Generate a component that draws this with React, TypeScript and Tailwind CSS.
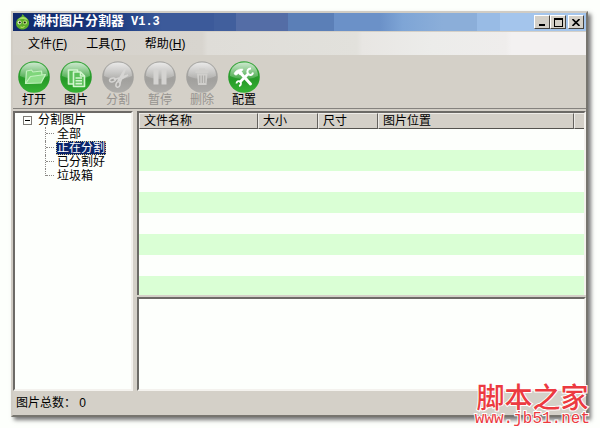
import React from 'react'

const FONT = "font-['Liberation_Sans','Noto_Sans_CJK_SC',sans-serif]"
const TITLE_FONT = "font-['Liberation_Mono','Noto_Sans_CJK_SC',monospace]"

// 系统控件的凸起 / 凹陷边框
const SUNKEN = 'border-2 border-t-[#6c6a66] border-l-[#6c6a66] border-r-[#f4f2ee] border-b-[#f4f2ee]'
const RAISED = 'border border-t-white border-l-white border-r-[#45423e] border-b-[#45423e]'

const menus = [
    { label: '文件', hotkey: 'F' },
    { label: '工具', hotkey: 'T' },
    { label: '帮助', hotkey: 'H' },
]

const tools = [
    { label: '打开', icon: 'open', enabled: true },
    { label: '图片', icon: 'image', enabled: true },
    { label: '分割', icon: 'cut', enabled: false },
    { label: '暂停', icon: 'pause', enabled: false },
    { label: '删除', icon: 'trash', enabled: false },
    { label: '配置', icon: 'config', enabled: true },
]

const columns = [
    { label: '文件名称', width: 'w-[119px]' },
    { label: '大小', width: 'w-[60px]' },
    { label: '尺寸', width: 'w-[60px]' },
    { label: '图片位置', width: '' },
    { label: '', width: 'w-[10px]' },
]

const treeItems = ['全部', '正在分割', '已分割好', '垃圾箱']

const glyphs: Record<string, React.ReactNode> = {
    open: (
        <g stroke="#c3f2bf" strokeWidth="1.2" strokeLinejoin="round">
            <path d="M7.500 22.500l1-12.500 5-1 1.500 2 8.500-1 .5 4" fill="#7fd67b" />
            <path d="M7.500 22.500l5-7 15-2L23 22z" fill="#8fdf8b" />
        </g>
    ),
    image: (
        <g stroke="#d3f6cf" strokeWidth="1.6" fill="#5cc15a" strokeLinejoin="round">
            <path d="M8.500 9h9v14h-9z" />
            <path d="M13.500 11h7l4 4v10.500h-11z" />
            <path d="M20.500 11v4h4M15.500 17h6.500M15.500 19.800h6.500M15.500 22.600h6.500" fill="none" />
        </g>
    ),
    cut: (
        <g stroke="#d6d5d3" fill="none" strokeLinecap="round">
            <path d="M12.500 18.500L26 14l-9 5.500M16 20L23.500 7.500 18 22" strokeWidth="1.600" />
            <ellipse cx="10.500" cy="19" rx="3" ry="1.800" strokeWidth="1.500" transform="rotate(-15 10.500 19)" />
            <ellipse cx="16" cy="23.500" rx="2" ry="2.800" strokeWidth="1.500" transform="rotate(15 16 23.500)" />
        </g>
    ),
    pause: <path d="M9.500 8.500h5v15h-5zM17.500 8.500h5v15h-5z" fill="#d4d3d1" />,
    trash: (
        <g fill="#d0cfcc">
            <path d="M13 7.500h6V9h-6zM9.500 9h13v3h-13zM11 12.500h10.500L20.500 24h-8.500z" />
            <path d="M13.800 14.500v7.500M16.300 14.500v7.500M18.800 14.500v7.500" stroke="#a5a4a1" />
        </g>
    ),
    config: (
        <g fill="#fff" stroke="#fff">
            <path d="M6 13c1-3 4-5.500 9-5l-.5 1.500-1 1 1 1.500-2.500 2-1.500-1.500-2.500 1.800z" strokeWidth="0.500" />
            <path d="M13 12.500l9.500 10.500" strokeWidth="3" strokeLinecap="round" />
            <path d="M11.500 21.500l9-9" strokeWidth="2.600" />
            <path d="M23 7.500c-3 0-4.500 2.500-3 5s4.500 2 5-1" strokeWidth="2" fill="none" />
            <path d="M8.500 22.500c0-2 2-3 3.500-2s1.500 4-1 4.500" strokeWidth="1.800" fill="none" />
        </g>
    ),
}

const ToolIcon: React.FC<{ name: string; enabled: boolean }> = ({ name, enabled }) => (
    <svg viewBox="0 0 32 32" className="h-8 w-8" aria-hidden="true">
        <defs>
            <linearGradient id={`ball-${name}`} x1="0" y1="0" x2="0" y2="1">
                <stop offset="0" stopColor={enabled ? '#36a43a' : '#aaa9a6'} />
                <stop offset="0.600" stopColor={enabled ? '#279b29' : '#a2a19e'} />
                <stop offset="1" stopColor={enabled ? '#37b334' : '#aeadaa'} />
            </linearGradient>
            <linearGradient id={`gloss-${name}`} x1="0" y1="0" x2="0" y2="1">
                <stop offset="0" stopColor="#fff" stopOpacity="0.750" />
                <stop offset="1" stopColor="#fff" stopOpacity="0.150" />
            </linearGradient>
        </defs>
        <circle cx="16" cy="16" r="15.800" fill={`url(#ball-${name})`} />
        <path d="M2 15C2 6 8 1.500 16 1.500S30 6 30 15c-8 4-20 4-28 0z" fill={`url(#gloss-${name})`} />
        {glyphs[name]}
    </svg>
)

const AppIcon = () => (
    <svg viewBox="0 0 16 16" className="h-4 w-4" aria-hidden="true">
        <path d="M7 0c1.500 1 2 1.500 2.500 2.500C13 4 14.500 7 14 10s-3 5.500-6.500 5.500S1 13 1 9.500 3 4 6 3C7 2 7.200 1 7 0z" fill="#5fae2c" />
        <path d="M3 6c1-2 3-3 5-3s4 1 5 3.500C10 5 6 4.500 3 6z" fill="#a5dc68" />
        <circle cx="4.500" cy="8.500" r="2" fill="#e7f2ce" />
        <circle cx="10" cy="8.500" r="2" fill="#c7e58a" />
        <circle cx="4.800" cy="8.500" r="1.100" fill="#17230d" />
        <circle cx="9.800" cy="8.500" r="1.100" fill="#17230d" />
        <path d="M5.500 13q2 1 4-.5" stroke="#d5e870" fill="none" />
    </svg>
)

const TitleBar = () => (
    <header className="flex h-[18px] shrink-0 items-center bg-[linear-gradient(to_right,#102a6b_0%,#19357a_16%,#2b4b8e_22%,#3c5a9a_26%,#3c5a9a_35%,#415f9d_35%,#415f9d_39%,#546da6_39%,#546da6_48%,#5b7fb7_48%,#5b7fb7_56%,#6b91c8_56%,#6b91c8_64%,#7ea5d6_68%,#8baed9_75%,#8baed9_81%,#98bbe5_81%,#98bbe5_85%,#a4c5ec_85%,#a4c5ec_100%)] px-0.5">
        <AppIcon />
        <h1 className={`ml-0.5 flex flex-1 items-center gap-[7px] text-[13px] leading-4 font-bold text-white ${TITLE_FONT}`}>
            潮村图片分割器 <span className="text-xs leading-4">V1.3</span>
        </h1>
        <button aria-label="最小化" className={`flex h-3.5 w-4 items-end justify-center bg-[#d4d0c8] pb-0.5 ${RAISED}`}>
            <span className="h-0.5 w-1.5 bg-black" />
        </button>
        <button aria-label="最大化" className={`flex h-3.5 w-4 items-center justify-center bg-[#d4d0c8] ${RAISED}`}>
            <span className="h-[9px] w-[9px] border border-t-2 border-black" />
        </button>
        <button aria-label="关闭" className={`ml-0.5 flex h-3.5 w-4 items-center justify-center bg-[#d4d0c8] ${RAISED}`}>
            <svg viewBox="0 0 8 7" className="h-[7px] w-2" aria-hidden="true">
                <path d="M0.500 0l7 7M7.500 0l-7 7" stroke="#000" strokeWidth="1.600" />
            </svg>
        </button>
    </header>
)

const MenuBar = () => (
    <nav className="flex h-6 shrink-0 items-center border-t border-[#d4d0c8] bg-[linear-gradient(to_right,#d5d1ca_0%,#d8d5cf_33%,#dfddd8_34%,#e2e1dc_60%,#e8e6e3_61%,#ececea_73%,#efedec_86%,#f3f1f1_87%,#f3f1f1_100%)] pt-px pl-[15px]">
        {menus.map((menu) => (
            <button key={menu.label} className="mr-[19px] text-xs leading-4">
                {menu.label}(<u>{menu.hotkey}</u>)
            </button>
        ))}
    </nav>
)

const ToolBar = () => (
    <div role="toolbar" className="flex h-[54px] shrink-0 border-b border-[#85827e] pt-1.5">
        {tools.map((tool) => (
            <button
                key={tool.label}
                disabled={!tool.enabled}
                className="flex w-[42px] flex-col items-center text-xs leading-[14px] text-black disabled:text-[#96938f]"
            >
                <ToolIcon name={tool.icon} enabled={tool.enabled} />
                {tool.label}
            </button>
        ))}
    </div>
)

const Tree = () => (
    <aside className={`w-[120px] shrink-0 bg-[#fdfffc] pl-2 text-xs leading-[14px] ${SUNKEN}`}>
        <div className="flex items-center">
            <button aria-label="折叠" className="mr-1.5 flex h-[9px] w-[9px] items-center justify-center border border-[#7d7b76]">
                <span className="h-px w-[5px] bg-black" />
            </button>
            分割图片
        </div>
        <ul className="ml-[22px]">
            {treeItems.map((item) => (
                <li key={item} className="group flex">
                    <span className="w-px border-l border-dotted border-[#8b8986] group-last:h-[7px]" />
                    <span className="mr-0.5 h-[7px] w-2 border-b border-dotted border-[#8b8986]" />
                    <button
                        aria-current={item === '正在分割'}
                        className="h-[14px] px-px leading-[14px] aria-[current=true]:bg-[#0a246a] aria-[current=true]:text-white aria-[current=true]:outline-1 aria-[current=true]:-outline-offset-1 aria-[current=true]:outline-[#d9c98b] aria-[current=true]:outline-dotted"
                    >
                        {item}
                    </button>
                </li>
            ))}
        </ul>
    </aside>
)

const FileTable = () => (
    <div className={`bg-[#fdfffc] ${SUNKEN} border-b-0`}>
        <table className="w-full table-fixed border-separate border-spacing-0 text-xs">
            <thead>
                <tr>
                    {columns.map((column, index) => (
                        <th
                            key={index}
                            className={`h-4 border-t border-r border-b border-l border-t-[#eeece8] border-r-[#65625e] border-b-[#55534f] border-l-[#eeece8] bg-[#d4d0c8] p-0 pl-1 text-left leading-[14px] font-normal last:border-r-0 last:pl-0 ${column.width}`}
                        >
                            {column.label}
                        </th>
                    ))}
                </tr>
            </thead>
            <tbody>
                {Array.from({ length: 8 }, (_, row) => (
                    <tr key={row} className="h-[21px] last:h-[19px] even:bg-[#daffd5]">
                        <td colSpan={5} className="p-0" />
                    </tr>
                ))}
            </tbody>
        </table>
    </div>
)

const Watermark = () => (
    <a href="#" className="absolute right-2.5 bottom-[3px] flex flex-col items-center text-[#ec3a40] [paint-order:stroke_fill] [-webkit-text-stroke:2px_#fff]">
        <span className="font-['Noto_Sans_CJK_SC',sans-serif] text-[28px] leading-[34px] font-medium">脚本之家</span>
        <span className="font-['Liberation_Mono',monospace] text-base leading-3">www.jb51.net</span>
    </a>
)

export default function App() {
    return (
        <div className={`relative flex min-h-screen flex-col bg-[#fdfffc] pt-[11px] pr-3 pb-[11px] pl-[11px] text-black ${FONT}`}>
            <div className="flex flex-1 flex-col border-2 border-t-[#d0ccc4] border-r-[#77756f] border-b-[#77756f] border-l-[#d0ccc4] bg-[#d4d0c8] shadow-[3px_3px_4px_#777]">
                <TitleBar />
                <MenuBar />
                <ToolBar />
                <main className="flex flex-1 gap-1 pt-0.5">
                    <Tree />
                    <div className="flex min-w-0 flex-1 flex-col gap-0.5">
                        <FileTable />
                        <section aria-label="预览" className={`flex-1 bg-[#fdfffc] ${SUNKEN}`} />
                    </div>
                </main>
                <footer className="flex h-6 shrink-0 items-center pl-[3px] text-xs">图片总数： 0</footer>
            </div>
            <Watermark />
        </div>
    )
}
